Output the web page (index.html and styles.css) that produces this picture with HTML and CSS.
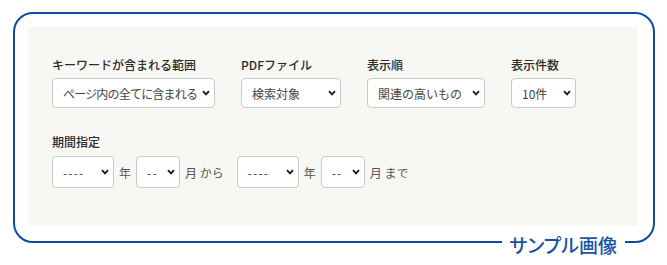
FILE: index.html
```html
<!DOCTYPE html>
<html lang="ja">
<head>
    <meta charset="utf-8">
    <title>検索条件</title>
    <link rel="stylesheet" href="styles.css">
</head>
<body>
    <div class="frame">
        <div class="panel">
            <div class="row">
                <div class="field">
                    <label class="field-label" for="scope">キーワードが含まれる範囲</label>
                    <span class="select-wrap w-scope">
                        <select id="scope" class="tight"><option>ページ内の全てに含まれる</option></select>
                        <svg class="chev" width="8" height="6" viewBox="0 0 8 6"><path d="M1 1.2 L4 4.4 L7 1.2" fill="none" stroke="#1a1a1a" stroke-width="1.8"/></svg>
                    </span>
                </div>
                <div class="field">
                    <label class="field-label" for="pdf">PDFファイル</label>
                    <span class="select-wrap w-pdf">
                        <select id="pdf"><option>検索対象</option></select>
                        <svg class="chev" width="8" height="6" viewBox="0 0 8 6"><path d="M1 1.2 L4 4.4 L7 1.2" fill="none" stroke="#1a1a1a" stroke-width="1.8"/></svg>
                    </span>
                </div>
                <div class="field">
                    <label class="field-label" for="order">表示順</label>
                    <span class="select-wrap w-order">
                        <select id="order"><option>関連の高いもの</option></select>
                        <svg class="chev" width="8" height="6" viewBox="0 0 8 6"><path d="M1 1.2 L4 4.4 L7 1.2" fill="none" stroke="#1a1a1a" stroke-width="1.8"/></svg>
                    </span>
                </div>
                <div class="field">
                    <label class="field-label" for="count">表示件数</label>
                    <span class="select-wrap w-count">
                        <select id="count"><option>10件</option></select>
                        <svg class="chev" width="8" height="6" viewBox="0 0 8 6"><path d="M1 1.2 L4 4.4 L7 1.2" fill="none" stroke="#1a1a1a" stroke-width="1.8"/></svg>
                    </span>
                </div>
            </div>

            <div class="period">
                <div class="field-label">期間指定</div>
                <div class="period-row">
                    <span class="select-wrap w-year">
                        <select class="dash"><option>----</option></select>
                        <svg class="chev" width="8" height="6" viewBox="0 0 8 6"><path d="M1 1.2 L4 4.4 L7 1.2" fill="none" stroke="#1a1a1a" stroke-width="1.8"/></svg>
                    </span>
                    <span class="unit">年</span>
                    <span class="select-wrap w-month">
                        <select class="dash"><option>--</option></select>
                        <svg class="chev" width="8" height="6" viewBox="0 0 8 6"><path d="M1 1.2 L4 4.4 L7 1.2" fill="none" stroke="#1a1a1a" stroke-width="1.8"/></svg>
                    </span>
                    <span class="unit sep">月 から</span>
                    <span class="select-wrap w-year">
                        <select class="dash"><option>----</option></select>
                        <svg class="chev" width="8" height="6" viewBox="0 0 8 6"><path d="M1 1.2 L4 4.4 L7 1.2" fill="none" stroke="#1a1a1a" stroke-width="1.8"/></svg>
                    </span>
                    <span class="unit">年</span>
                    <span class="select-wrap w-month">
                        <select class="dash"><option>--</option></select>
                        <svg class="chev" width="8" height="6" viewBox="0 0 8 6"><path d="M1 1.2 L4 4.4 L7 1.2" fill="none" stroke="#1a1a1a" stroke-width="1.8"/></svg>
                    </span>
                    <span class="unit">月 まで</span>
                </div>
            </div>
        </div>
        <span class="caption">サンプル画像</span>
    </div>
</body>
</html>
```

FILE: styles.css
```css
html, body {
    height: 265px;
}

body {
    margin: 0;
    padding-top: 12px;
    box-sizing: border-box;
    background: #fff;
    font-family: "Noto Sans CJK JP", "Noto Sans", sans-serif;
    color: #333;
}

.frame {
    position: relative;
    width: 642px;
    box-sizing: border-box;
    margin-left: 13px;
    padding: 13px 16px 15px 13px;
    border: 2px solid #0d4c9f;
    border-radius: 20px;
}

.panel {
    height: 199px;
    box-sizing: border-box;
    padding: 29px 24px 0;
    background: #f7f7f3;
}

.row {
    display: flex;
    gap: 26px;
}

.field {
    display: flex;
    flex-direction: column;
}

.field-label {
    font-size: 12px;
    font-weight: 500;
    line-height: 18px;
    color: #2b2b2b;
    margin-bottom: 4px;
}

.select-wrap {
    position: relative;
    display: block;
}

.select-wrap select {
    appearance: none;
    -webkit-appearance: none;
    width: 100%;
    height: 30px;
    box-sizing: border-box;
    padding: 0 14px 0 10px;
    border: 1px solid #c9c9c9;
    border-radius: 4px;
    background: #fff;
    font-family: inherit;
    font-size: 12px;
    color: #444;
}

.select-wrap select.tight {
    letter-spacing: -0.8px;
}

.select-wrap select.dash {
    letter-spacing: 1.2px;
}

.chev {
    position: absolute;
    right: 5px;
    top: 12px;
    pointer-events: none;
}

.w-scope { width: 163px; }
.w-pdf { width: 100px; }
.w-order { width: 118px; }
.w-count { width: 65px; }
.w-year { width: 62px; }
.w-month { width: 44px; }

.period {
    margin-top: 25px;
}

.period .field-label {
    margin-bottom: 5px;
}

.period-row {
    display: flex;
    align-items: center;
    gap: 4px;
}

.period-row .select-wrap select {
    height: 32px;
}

.period-row .chev {
    top: 13px;
}

.unit {
    font-size: 12px;
    color: #555;
    margin: 0 1px;
}

.sep {
    margin-right: 9px;
}

.caption {
    position: absolute;
    right: 28px;
    bottom: -15px;
    padding: 0 8px;
    background: #fff;
    font-size: 19px;
    line-height: 22px;
    font-weight: 500;
    color: #1a52a3;
    font-feature-settings: "palt";
}
```
